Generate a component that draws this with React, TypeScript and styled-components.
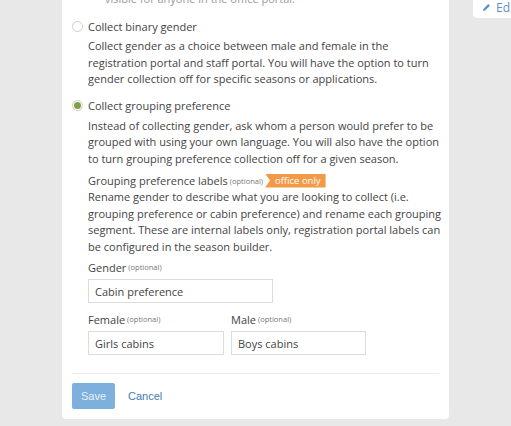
import React from "react";
import styled, { createGlobalStyle } from "styled-components";

const Global = createGlobalStyle`
  html, body { margin: 0; padding: 0; }
  body { background: #e8e8e8; font-family: "Open Sans", "Noto Sans", sans-serif; overflow: hidden; }
`;

const Page = styled.div`
  display: flex;
  align-items: flex-start;
  height: 426px;
  background: #e8e8e8;
  overflow: hidden;
`;

const Card = styled.div`
  margin-left: 62px;
  margin-top: -9px;
  width: 387px;
  height: 428px;
  box-sizing: border-box;
  background: #fff;
  border-radius: 4px;
  padding: 0 10px;
  display: flex;
  flex-direction: column;
`;

const SideCard = styled.div`
  margin-left: 24px;
  flex: 1;
  height: 22px;
  background: #fff;
  border-radius: 0 0 0 4px;
  display: flex;
  align-items: center;
  gap: 5px;
  padding-left: 9px;
  color: #5a90d2;
  font-size: 12px;
  margin-top: -4px;
`;

const Faded = styled.div`
  padding-left: 33px;
  color: #9a9a9a;
  font-size: 11px;
  line-height: 16px;
  margin-bottom: 10px;
`;

const OptionRow = styled.div<{ $top?: number }>`
  display: flex;
  align-items: center;
  gap: 5px;
  margin-top: ${(p) => p.$top ?? 0}px;
  height: 18px;
`;

const Radio = styled.span<{ $checked?: boolean }>`
  width: 11px;
  height: 11px;
  border-radius: 50%;
  box-sizing: border-box;
  border: 1px solid ${(p) => (p.$checked ? "#dccab4" : "#cfcfcf")};
  background: #fff;
  display: flex;
  align-items: center;
  justify-content: center;
  &::after {
    content: "";
    width: 7px;
    height: 7px;
    border-radius: 50%;
    background: ${(p) => (p.$checked ? "#7aa44a" : "transparent")};
  }
`;

const OptionLabel = styled.span`
  font-size: 11px;
  color: #444;
`;

const Indent = styled.div`
  padding-left: 16px;
  margin-right: -8px;
  display: flex;
  flex-direction: column;
`;

const Desc = styled.p<{ $top?: number }>`
  margin: ${(p) => p.$top ?? 3}px 0 0;
  font-size: 11px;
  line-height: 16.5px;
  color: #444;
`;

const SubHead = styled.div`
  margin-top: 5px;
  display: flex;
  align-items: center;
  height: 17px;
  font-size: 11px;
  color: #444;
`;

const Optional = styled.span`
  font-size: 7.5px;
  color: #777;
  margin-left: 2px;
`;

const Badge = styled.span`
  margin-left: 2px;
  height: 14px;
  padding: 0 5px 0 10px;
  background: #f29a47;
  color: #fff;
  font-size: 9.5px;
  display: flex;
  align-items: center;
  clip-path: polygon(0 0, 100% 0, 100% 100%, 0 100%, 5px 50%);
`;

const FieldLabel = styled.div`
  font-size: 11px;
  color: #444;
  height: 16px;
  display: flex;
  align-items: center;
`;

const Input = styled.div<{ $w: number }>`
  width: ${(p) => p.$w}px;
  height: 24px;
  box-sizing: border-box;
  border: 1px solid #dcdcdc;
  display: flex;
  align-items: center;
  padding-left: 6px;
  font-size: 11px;
  color: #444;
  margin-top: 4px;
`;

const Field = styled.div`
  display: flex;
  flex-direction: column;
`;

const FieldRow = styled.div<{ $top: number }>`
  display: flex;
  gap: 7px;
  margin-top: ${(p) => p.$top}px;
`;

const Divider = styled.div`
  margin-top: 18px;
  height: 1px;
  background: #ececec;
`;

const Actions = styled.div`
  display: flex;
  align-items: center;
  gap: 13px;
  margin-top: 9px;
`;

const SaveButton = styled.button`
  width: 43px;
  height: 26px;
  border: none;
  border-radius: 2px;
  background: #7db0dd;
  color: #e8f1fa;
  font-family: "Liberation Sans", Arial, sans-serif;
  font-size: 11px;
  padding: 0;
`;

const CancelLink = styled.span`
  font-family: "Liberation Sans", Arial, sans-serif;
  font-size: 11px;
  color: #3f7bb9;
`;

export default function App() {
  return (
    <>
      <Global />
      <Page>
        <Card>
          <Faded>visible for anyone in the office portal.</Faded>
          <OptionRow>
            <Radio />
            <OptionLabel>Collect binary gender</OptionLabel>
          </OptionRow>
          <Indent>
            <Desc>
              Collect gender as a choice between male and female in the registration portal and staff portal. You will
              have the option to turn gender collection off for specific seasons or applications.
            </Desc>
          </Indent>
          <OptionRow $top={9}>
            <Radio $checked />
            <OptionLabel>Collect grouping preference</OptionLabel>
          </OptionRow>
          <Indent>
            <Desc>
              Instead of collecting gender, ask whom a person would prefer to be grouped with using your own language.
              You will also have the option to turn grouping preference collection off for a given season.
            </Desc>
            <SubHead>
              Grouping preference labels<Optional>(optional)</Optional>
              <Badge>office only</Badge>
            </SubHead>
            <Desc $top={0}>
              Rename gender to describe what you are looking to collect (i.e. grouping preference or cabin preference)
              and rename each grouping segment. These are internal labels only, registration portal labels can be
              configured in the season builder.
            </Desc>
            <FieldRow $top={4}>
              <Field>
                <FieldLabel>
                  Gender<Optional>(optional)</Optional>
                </FieldLabel>
                <Input $w={185}>Cabin preference</Input>
              </Field>
            </FieldRow>
            <FieldRow $top={8}>
              <Field>
                <FieldLabel>
                  Female<Optional>(optional)</Optional>
                </FieldLabel>
                <Input $w={136}>Girls cabins</Input>
              </Field>
              <Field>
                <FieldLabel>
                  Male<Optional>(optional)</Optional>
                </FieldLabel>
                <Input $w={135}>Boys cabins</Input>
              </Field>
            </FieldRow>
          </Indent>
          <Divider />
          <Actions>
            <SaveButton>Save</SaveButton>
            <CancelLink>Cancel</CancelLink>
          </Actions>
        </Card>
        <SideCard>
          <svg width="9" height="9" viewBox="0 0 10 10">
            <path d="M1 9 L1.6 6.6 L7 1.2 L8.8 3 L3.4 8.4 Z" fill="#5a90d2" />
          </svg>
          Ed
        </SideCard>
      </Page>
    </>
  );
}
